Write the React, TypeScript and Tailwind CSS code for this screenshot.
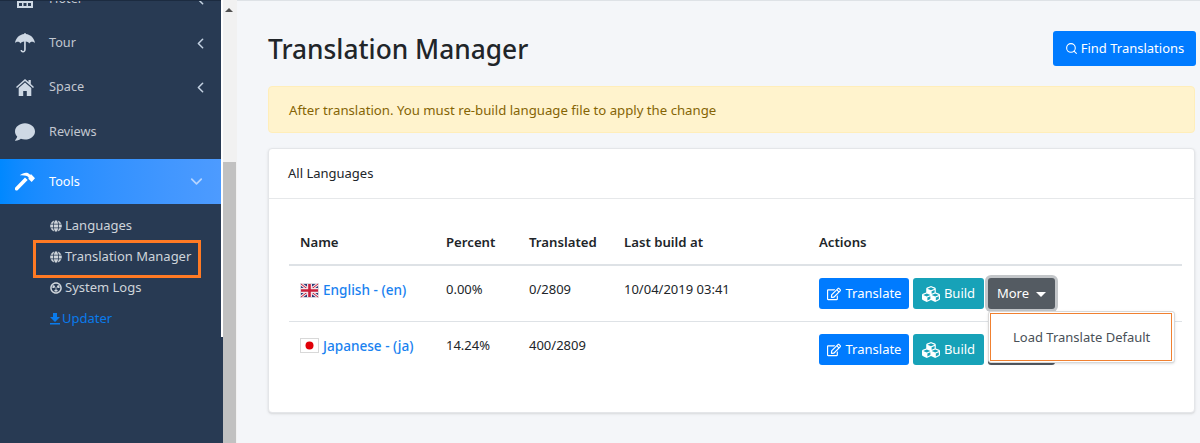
import React from "react";
import { FaComment, FaGlobe, FaRadiationAlt, FaRegEdit, FaCubes } from "react-icons/fa";
import { ChevronLeft, ChevronDown, Search } from "lucide-react";

const font = { fontFamily: '"Noto Sans", sans-serif' };

function MenuRow({ icon, label, chevron }: { icon: React.ReactNode; label: string; chevron?: boolean }) {
  return (
    <div className="flex h-[44px] items-center pl-[15px] pr-[12px]">
      <span className="flex w-[20px] justify-center text-[20px] text-[#ced8e4]">{icon}</span>
      <span className="ml-[14px] flex-1 text-[12.7px] text-[#c2c7d0]">{label}</span>
      {chevron && <ChevronLeft size={17} strokeWidth={2.2} className="text-[#c2d0e0]" />}
    </div>
  );
}

function SubRow({ icon, label, className = "" }: { icon: React.ReactNode; label: string; className?: string }) {
  return (
    <div className={`flex h-[31px] items-center gap-[3px] pl-[50px] text-[13px] text-[#ced4da] ${className}`}>
      {icon}
      <span>{label}</span>
    </div>
  );
}

function ActionButtons() {
  return (
    <div className="flex gap-[4px]">
      <button className="flex h-[31px] w-[90px] items-center justify-center gap-[5px] rounded-[3px] bg-[#007bff] pt-[1px] text-[13px] text-white">
        <FaRegEdit size={14} />
        Translate
      </button>
      <button className="flex h-[31px] w-[71px] items-center justify-center gap-[4px] rounded-[3px] bg-[#17a2b8] pt-[1px] text-[13px] text-white">
        <FaCubes size={18} />
        Build
      </button>
    </div>
  );
}

function More({ open }: { open?: boolean }) {
  return (
    <button
      className={`flex h-[31px] w-[67px] items-center justify-center gap-[7px] rounded-[3px] bg-[#545b62] pt-[1px] text-[13px] text-white ${open ? "ring-[3px] ring-[#c3c6c9]" : ""}`}
    >
      More
      <span className="h-0 w-0 border-x-[5px] border-t-[5px] border-x-transparent border-t-white" />
    </button>
  );
}

function FlagUK() {
  return (
    <svg width="19" height="15" viewBox="0 0 19 15" className="shrink-0">
      <rect width="19" height="15" fill="#d8d8de" />
      <rect x="1" y="1" width="17" height="13" fill="#2a3a78" />
      <path d="M1 1L18 14M18 1L1 14" stroke="#f2e4e8" strokeWidth="3" />
      <path d="M1 1L18 14M18 1L1 14" stroke="#c8203c" strokeWidth="1" />
      <path d="M9.5 1V14M1 7.5H18" stroke="#f2e4e8" strokeWidth="5" />
      <path d="M9.5 1V14M1 7.5H18" stroke="#c8203c" strokeWidth="2.6" />
    </svg>
  );
}

function FlagJP() {
  return (
    <svg width="19" height="15" viewBox="0 0 19 15" className="shrink-0">
      <rect x="0.5" y="0.5" width="18" height="14" fill="#fff" stroke="#d8d8d8" />
      <circle cx="9.5" cy="7.5" r="4" fill="#e00008" />
    </svg>
  );
}

function UmbrellaIcon() {
  return (
    <svg width="20" height="20" viewBox="0 0 20 20" fill="currentColor">
      <path d="M9.300 0h1.400v1.100C15.600 1.500 19.400 5.300 20 10.200c-.7-1-1.700-1.500-2.800-1.500-1.300 0-2.300.6-3 1.700-.7-1.100-1.900-1.700-3.400-1.800v7.600c0 1.900-1.100 3.300-2.800 3.300-1.400 0-2.500-1-2.500-2.400h1.600c0 .6.400 1 .9 1 .6 0 1.100-.6 1.100-1.700V8.600c-1.500.1-2.700.7-3.400 1.800-.7-1.100-1.700-1.700-3-1.700-1.100 0-2.100.5-2.700 1.500C.6 5.300 4.400 1.500 9.300 1.100z" />
    </svg>
  );
}

function HomeIcon() {
  return (
    <svg width="18" height="17" viewBox="0 0 18 17" fill="currentColor">
      <path d="M9 0l3.500 3.100V1h2.300v4.100L18 8l-1 1.100L9 2 1 9.100 0 8z" />
      <path d="M9 3.500l6.300 5.600V17h-4.500v-5H7.200v5H2.700V9.100z" />
    </svg>
  );
}

function HammerIcon() {
  return (
    <svg width="21" height="19" viewBox="0 0 21 19" fill="#fff">
      <path d="M5 3C8 .5 11-.3 13.500.5L16 2.500l1-.5 4 4-3.500 4L14 6.500l.5-1L13 4C11 3.500 8 3 5 3z" />
      <path d="M10.500 5.400l2.800 2.600L3 18.400c-.8.800-2 .8-2.700 0-.7-.7-.7-1.800 0-2.600z" />
    </svg>
  );
}

export default function App() {
  return (
    <div style={font} className="flex h-[443px] w-[1200px] overflow-hidden bg-[#f4f6f9]">
      <aside className="flex w-[237px] shrink-0">
        <nav className="h-full w-[221px] overflow-hidden border-t border-[#1c2b40] bg-[#283a53]">
          <div className="-mt-[24px]">
            <MenuRow
              chevron
              label="Hotel"
              icon={
                <svg width="18" height="18" viewBox="0 0 18 18" fill="currentColor">
                  <path d="M1 0h16v18H1zM3 13v3h3v-3zm4.500 0v3h3v-3zM12 13v3h3v-3z" fillRule="evenodd" />
                </svg>
              }
            />
          </div>
          <MenuRow chevron label="Tour" icon={<UmbrellaIcon />} />
          <MenuRow chevron label="Space" icon={<HomeIcon />} />
          <div className="pt-[1px]">
            <MenuRow label="Reviews" icon={<FaComment />} />
          </div>
          <div className="mt-[5px] flex h-[45px] items-center bg-gradient-to-r from-[#0088ff] to-[#4d9bff] pl-[15px] pr-[15px] text-white">
            <span className="flex w-[20px] justify-center">
              <HammerIcon />
            </span>
            <span className="ml-[14px] flex-1 pt-[1px] text-[12.7px]">Tools</span>
            <ChevronDown size={19} strokeWidth={2.2} className="text-[#b5d4ff]" />
          </div>
          <div className="pt-[6px]">
            <SubRow icon={<FaGlobe size={12} />} label="Languages" />
            <div className="relative">
              <SubRow icon={<FaGlobe size={12} />} label="Translation Manager" />
              <div className="absolute left-[33px] top-[-1px] h-[38px] w-[168px] border-[3px] border-[#ff7a24]" />
            </div>
            <SubRow icon={<FaRadiationAlt size={12} />} label="System Logs" />
            <SubRow
              className="!gap-[2px] !text-[#0a7bec]"
              icon={
                <svg width="10" height="12" viewBox="0 0 10 12" fill="currentColor">
                  <path d="M3 0h4v4h3L5 9 0 4h3zM0 10h10v1.500H0z" />
                </svg>
              }
              label="Updater"
            />
          </div>
        </nav>
        <div className="relative flex h-full w-[16px] flex-col bg-[#f1f1f1]">
          <div className="flex h-[162px] justify-center pt-[8px] pr-[1px]">
            <span className="h-0 w-0 border-x-[4px] border-b-[4px] border-x-transparent border-b-[#505050]" />
          </div>
          <div className="ml-[2px] h-[281px] w-[13px] bg-[#c1c1c1]" />
          <div className="absolute left-0 top-[0px] h-[337px] w-[2px] bg-white" />
          <div className="absolute bottom-0 left-0 h-[106px] w-[2px] bg-[#283a53]" />
        </div>
      </aside>

      <main className="min-w-0 flex-1 border-t border-[#dee2e6] pl-[31px] pr-[5px] pt-[30px]">
        <div className="flex h-[35px] items-center justify-between">
          <h1 className="translate-y-[1px] text-[26.3px] font-medium text-[#212529]">Translation Manager</h1>
          <button className="-mr-[1px] flex h-[35px] w-[143px] items-center justify-center gap-[3px] rounded-[3px] bg-[#007bff] text-[13px] text-white">
            <Search size={13} strokeWidth={2} />
            Find Translations
          </button>
        </div>
        <div className="mt-[20px] flex h-[47px] items-center rounded-[4px] border border-[#ffeeba] bg-[#fff3cd] px-[20px] pt-[2px] text-[13.2px] text-[#856404]">
          After translation. You must re-build language file to apply the change
        </div>
        <section className="mt-[15px] h-[265px] rounded-[4px] border border-[#e4e6e9] bg-white pr-[12px] shadow-sm">
          <div className="-mr-[12px] flex h-[50px] items-center border-b border-[#e6e8ea] px-[19px] pt-[1px] text-[13px] text-[#212529]">
            All Languages
          </div>
          <div className="pl-[20px] pt-[23px]">
            <table className="w-[893px] table-fixed text-left text-[13px] text-[#212529]">
              <colgroup>
                <col className="w-[145px]" />
                <col className="w-[83px]" />
                <col className="w-[96px]" />
                <col className="w-[194px]" />
                <col />
              </colgroup>
              <thead className="text-[13.2px]">
                <tr className="h-[43px] border-b-2 border-[#dee2e6]">
                  <th className="pl-[11px] font-semibold">Name</th>
                  <th className="pl-[12px] font-semibold">Percent</th>
                  <th className="pl-[12px] font-semibold">Translated</th>
                  <th className="pl-[11px] font-semibold">Last build at</th>
                  <th className="pl-[12px] font-semibold">Actions</th>
                </tr>
              </thead>
              <tbody>
                <tr className="h-[56px] border-b border-[#dee2e6] align-top">
                  <td className="pl-[11px] pt-[14px]">
                    <span className="flex items-center gap-[4px] text-[13.6px] font-medium text-[#1a82f0]">
                      <FlagUK />
                      English - (en)
                    </span>
                  </td>
                  <td className="pl-[12px] pt-[14px]">0.00%</td>
                  <td className="pl-[12px] pt-[14px]">0/2809</td>
                  <td className="pl-[11px] pt-[14px]">10/04/2019 03:41</td>
                  <td className="pl-[12px] pt-[12px]">
                    <div className="flex gap-[4px]">
                      <ActionButtons />
                      <More open />
                    </div>
                  </td>
                </tr>
                <tr className="h-[56px] align-top">
                  <td className="pl-[11px] pt-[14px]">
                    <span className="flex items-center gap-[4px] text-[13.6px] font-medium text-[#1a82f0]">
                      <FlagJP />
                      Japanese - (ja)
                    </span>
                  </td>
                  <td className="pl-[12px] pt-[14px]">14.24%</td>
                  <td className="pl-[12px] pt-[14px]">400/2809</td>
                  <td />
                  <td className="relative pl-[12px] pt-[12px]">
                    <div className="flex gap-[4px]">
                      <ActionButtons />
                      <More />
                    </div>
                    <div className="absolute left-[181px] top-[-11px] flex h-[52px] w-[187px] items-center rounded-[3px] border border-[#d8d8d8] bg-white shadow-sm">
                      <div className="ml-[1px] flex h-[48px] w-[182px] items-center border border-[#f08030] pl-[22px] pt-[3px] text-[13px] text-[#495057]">
                        Load Translate Default
                      </div>
                    </div>
                  </td>
                </tr>
              </tbody>
            </table>
          </div>
        </section>
      </main>
    </div>
  );
}
